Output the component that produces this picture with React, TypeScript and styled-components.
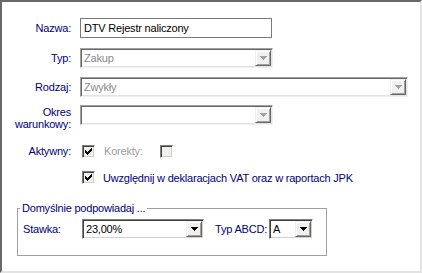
import React from 'react';
import styled, { createGlobalStyle } from 'styled-components';

const GlobalStyle = createGlobalStyle`
  html, body {
    margin: 0;
    padding: 0;
    background: #fff;
  }
  body {
    font-family: "Liberation Sans", Arial, sans-serif;
    font-size: 11px;
    letter-spacing: -0.2px;
    color: #000;
  }
`;

const Frame = styled.div`
  box-sizing: border-box;
  width: 422px;
  height: 273px;
  border-style: solid;
  border-width: 2px;
  border-color: #696969 #e3e3e3 #e3e3e3 #696969;
  background: #fff;
  padding-top: 16px;
`;

const Row = styled.div<{ $top?: number; $h?: number; $align?: string }>`
  display: grid;
  grid-template-columns: 69px 1fr;
  column-gap: 9px;
  align-items: ${p => p.$align || 'center'};
  margin-top: ${p => p.$top || 0}px;
  min-height: ${p => p.$h || 20}px;
`;

const Label = styled.label<{ $lines?: boolean }>`
  color: #000080;
  text-align: right;
  white-space: nowrap;
  line-height: ${p => (p.$lines ? '12px' : '14px')};
  padding-top: ${p => (p.$lines ? '1px' : '0')};
`;

const TextBox = styled.div<{ $w: number }>`
  box-sizing: border-box;
  width: ${p => p.$w}px;
  height: 20px;
  border: 1px solid #7a7a7a;
  background: #fff;
  padding: 0 3px;
  line-height: 18px;
  white-space: nowrap;
  overflow: hidden;
`;

const Combo = styled.div<{ $w: number; $off?: boolean }>`
  box-sizing: border-box;
  width: ${p => p.$w}px;
  height: 20px;
  display: flex;
  background: #fff;
  border-style: solid;
  border-width: 1px;
  border-color: ${p => (p.$off ? '#a0a0a0 #f0f0f0 #f0f0f0 #a0a0a0' : '#808080 #fff #fff #808080')};
  box-shadow: ${p =>
    p.$off ? 'inset 1px 1px #696969, inset -1px -1px #e3e3e3' : 'inset 1px 1px #404040, inset -1px -1px #d4d0c8'};
  padding: 1px;
`;

const ComboValue = styled.span<{ $off?: boolean }>`
  flex: 1;
  padding-left: 2px;
  line-height: 16px;
  color: ${p => (p.$off ? '#8a8a8a' : '#000')};
  white-space: nowrap;
  overflow: hidden;
`;

const DropButton = styled.span`
  box-sizing: border-box;
  width: 16px;
  height: 16px;
  display: flex;
  align-items: center;
  justify-content: center;
  background: #f0f0f0;
  border-style: solid;
  border-width: 1px;
  border-color: #f0f0f0 #696969 #696969 #f0f0f0;
  box-shadow: inset 1px 1px #fff, inset -1px -1px #a0a0a0;
`;

const Field = styled.div`
  display: flex;
  align-items: center;
`;

const Box = styled.span<{ $ml?: number }>`
  box-sizing: border-box;
  width: 13px;
  height: 13px;
  display: inline-flex;
  align-items: center;
  justify-content: center;
  margin-left: ${p => p.$ml ?? 2}px;
  background: #f0f0f0;
  border-style: solid;
  border-width: 1px;
  border-color: #808080 #fff #fff #808080;
  box-shadow: inset 1px 1px #404040, inset -1px -1px #d4d0c8;
  flex: none;
`;

const Caption = styled.span<{ $off?: boolean; $ml?: number; $w?: number }>`
  color: ${p => (p.$off ? '#a0a0a0' : '#000080')};
  margin-left: ${p => p.$ml || 0}px;
  width: ${p => (p.$w ? `${p.$w}px` : 'auto')};
  white-space: nowrap;
`;

const Group = styled.fieldset`
  box-sizing: border-box;
  width: 310px;
  margin: 17px 0 0 15px;
  padding: 4px 0 16px 5px;
  border: 1px solid #a0a0a0;
  min-width: 0;
`;

const Legend = styled.legend`
  color: #000080;
  padding: 0 2px;
  margin-left: -3px;
  line-height: 14px;
`;

const GroupRow = styled.div`
  display: flex;
  align-items: center;
  height: 20px;
`;

const GroupLabel = styled.span<{ $w: number; $ml?: number }>`
  color: #000080;
  width: ${p => p.$w}px;
  margin-left: ${p => p.$ml || 0}px;
  white-space: nowrap;
  flex: none;
`;

const Arrow = ({ off }: { off?: boolean }) => (
  <svg width="7" height="4" viewBox="0 0 7 4" shapeRendering="crispEdges">
    <path d="M0 0h7v1H0zM1 1h5v1H1zM2 2h3v1H2zM3 3h1v1H3z" fill={off ? '#a0a0a0' : '#000'} />
  </svg>
);

const Check = () => (
  <svg width="7" height="7" viewBox="0 0 7 7" shapeRendering="crispEdges">
    <path d="M6 0h1v1H6zM5 1h2v1H5zM0 2h1v1H0zM4 2h3v1H4zM0 3h2v1H0zM3 3h3v1H3zM0 4h5v1H0zM1 5h3v1H1zM2 6h1v1H2z" fill="#000" />
  </svg>
);

const Select = ({ w, value, off }: { w: number; value?: string; off?: boolean }) => (
  <Combo $w={w} $off={off}>
    <ComboValue $off={off}>{value}</ComboValue>
    <DropButton>
      <Arrow off={off} />
    </DropButton>
  </Combo>
);

const CheckBox = ({ checked, ml }: { checked?: boolean; ml?: number }) => (
  <Box $ml={ml}>{checked && <Check />}</Box>
);

export default function App() {
  return (
    <>
      <GlobalStyle />
      <Frame>
        <Row>
          <Label>Nazwa:</Label>
          <TextBox $w={192}>DTV Rejestr naliczony</TextBox>
        </Row>
        <Row $top={10}>
          <Label>Typ:</Label>
          <Select w={193} value="Zakup" off />
        </Row>
        <Row $top={9}>
          <Label>Rodzaj:</Label>
          <Select w={328} value="Zwykły" off />
        </Row>
        <Row $top={8} $align="start">
          <Label $lines>
            Okres
            <br />
            warunkowy:
          </Label>
          <Select w={193} off />
        </Row>
        <Row $top={14} $h={13}>
          <Label>Aktywny:</Label>
          <Field>
            <CheckBox checked />
            <Caption $off $ml={9} $w={56}>
              Korekty:
            </Caption>
            <CheckBox ml={0} />
          </Field>
        </Row>
        <Row $top={13} $h={13}>
          <span />
          <Field>
            <CheckBox checked />
            <Caption $ml={8}>Uwzględnij w deklaracjach VAT oraz w raportach JPK</Caption>
          </Field>
        </Row>
        <Group>
          <Legend>Domyślnie podpowiadaj ...</Legend>
          <GroupRow>
            <GroupLabel $w={59}>Stawka:</GroupLabel>
            <Select w={122} value="23,00%" />
            <GroupLabel $w={54} $ml={11}>
              Typ ABCD:
            </GroupLabel>
            <Select w={44} value="A" />
          </GroupRow>
        </Group>
      </Frame>
    </>
  );
}
